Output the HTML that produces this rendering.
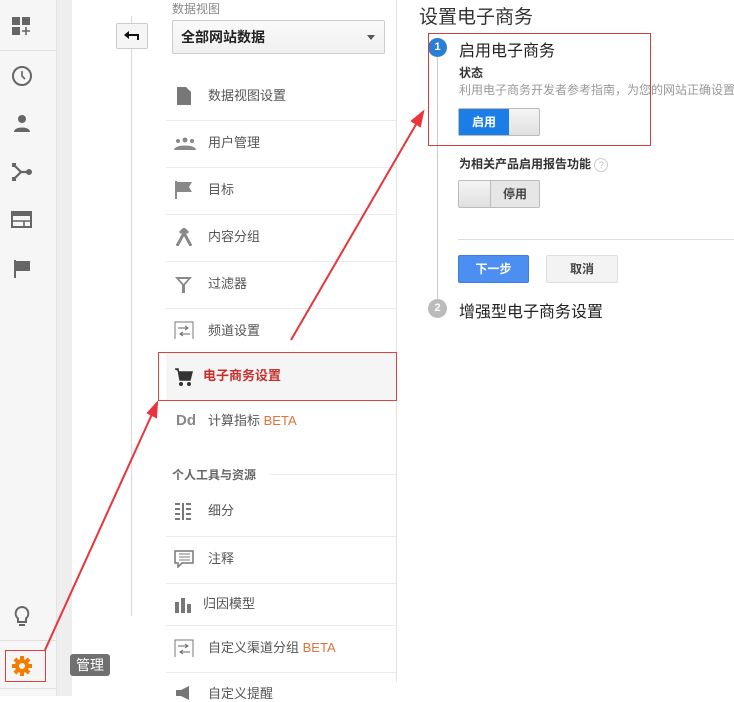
<!DOCTYPE html>
<html><head><meta charset="utf-8"><style>
*{margin:0;padding:0;box-sizing:border-box}
body{width:734px;height:696px;overflow:hidden;background:#fff;font-family:"Liberation Sans","Noto Sans CJK SC",sans-serif;position:relative;color:#333}
.a{position:absolute}
.sb{left:0;top:0;width:57px;height:696px;background:#f6f6f6;border-right:1px solid #e3e3e3}
.gut{left:57px;top:0;width:15px;height:696px;background:#eeeeee}
.mi{position:absolute;left:208px;font-size:13px;color:#555;line-height:16px}
.sep{position:absolute;left:166px;width:230px;height:1px;background:#ebebeb}
.ic{position:absolute;left:174px;width:20px;height:18px}
.beta{color:#e0733a}
</style></head><body>
<div class="a sb"></div>
<div class="a gut"></div>
<div class="a" style="left:0;top:50px;width:56px;height:1px;background:#e0e0e0"></div>
<div class="a" style="left:0;top:640px;width:56px;height:1px;background:#e0e0e0"></div>
<div class="a" style="left:0;top:688px;width:56px;height:1px;background:#e0e0e0"></div>
<svg class="a" style="left:12px;top:17px" width="22" height="20"><rect x="0" y="0" width="8" height="8" fill="#666"/><rect x="10" y="0" width="8" height="8" fill="#666"/><rect x="0" y="10" width="8" height="8" fill="#666"/><path d="M14 10v8M10 14h8" stroke="#666" stroke-width="1.6"/></svg>
<svg class="a" style="left:11px;top:65px" width="22" height="22"><circle cx="11" cy="11" r="9" fill="none" stroke="#666" stroke-width="2"/><path d="M11 6v5l3 3" stroke="#666" stroke-width="1.6" fill="none"/></svg>
<svg class="a" style="left:12px;top:114px" width="20" height="20"><circle cx="10" cy="5" r="4" fill="#666"/><path d="M2 18c0-6 16-6 16 0z" fill="#666"/></svg>
<svg class="a" style="left:11px;top:162px" width="22" height="20"><path d="M3 3l7 7h8M3 17l7-7" stroke="#666" stroke-width="2.2" fill="none"/><rect x="1" y="1" width="4" height="4" fill="#666"/><rect x="1" y="15" width="4" height="4" fill="#666"/><circle cx="18" cy="10" r="3" fill="#666"/></svg>
<svg class="a" style="left:11px;top:211px" width="22" height="18"><rect x="1" y="1" width="19" height="15" fill="none" stroke="#666" stroke-width="2"/><rect x="1" y="1" width="19" height="4" fill="#666"/><path d="M2 10h18M13 10v6" stroke="#666" stroke-width="1.6"/></svg>
<svg class="a" style="left:14px;top:259px" width="18" height="20"><path d="M1 1v18" stroke="#666" stroke-width="2"/><path d="M2 2h14v10H2z" fill="#666"/></svg>
<svg class="a" style="left:13px;top:605px" width="18" height="24"><path d="M9 2a6.5 6.5 0 0 0-4 11.5V17h8v-3.5A6.5 6.5 0 0 0 9 2z" fill="none" stroke="#666" stroke-width="2"/><path d="M6 20h6" stroke="#666" stroke-width="2"/></svg>
<svg class="a" style="left:11px;top:655px" width="22" height="22" viewBox="0 0 22 22"><g fill="#f57c00"><circle cx="11" cy="11" r="7"/><rect x="9" y="1" width="4" height="20"/><rect x="1" y="9" width="20" height="4"/><rect x="9" y="1" width="4" height="20" transform="rotate(45 11 11)"/><rect x="9" y="1" width="4" height="20" transform="rotate(-45 11 11)"/></g><circle cx="11" cy="11" r="3" fill="#f6f6f6"/></svg>
<div class="a" style="left:5px;top:650px;width:41px;height:32px;border:1px solid #e04040"></div>
<div class="a" style="left:70px;top:654px;width:40px;height:22px;background:#707070;border-radius:3px;color:#fff;font-size:14px;line-height:22px;text-align:center">管理</div>
<div class="a" style="left:131px;top:16px;width:1px;height:600px;background:#d8d8d8"></div>
<div class="a" style="left:116px;top:23px;width:32px;height:26px;border:1px solid #ccc;border-radius:2px;background:#f5f5f5"><svg width="30" height="24"><path d="M8 11h13v5" stroke="#111" stroke-width="2" fill="none"/><path d="M7 11l5-4v8z" fill="#111"/></svg></div>
<div class="a" style="left:172px;top:0;font-size:12px;color:#888">数据视图</div>
<div class="a" style="left:172px;top:20px;width:213px;height:34px;border:1px solid #ccc;border-radius:2px;background:linear-gradient(#fafafa,#f0f0f0);font-size:14px;font-weight:bold;line-height:32px;padding-left:8px;color:#222">全部网站数据<span style="position:absolute;right:9px;top:14px;border:4px solid transparent;border-top:5px solid #555"></span></div>
<div class="a" style="left:396px;top:0;width:1px;height:352px;background:#e5e5e5"></div>
<div class="a" style="left:396px;top:400px;width:1px;height:282px;background:#e5e5e5"></div>

<svg class="ic" style="top:87px"><path d="M3 0h9l5 5v13H3z" fill="#777"/></svg><div class="mi" style="top:88px">数据视图设置</div><div class="sep" style="top:120px"></div>
<svg class="ic" style="top:136px;width:24px"><circle cx="4" cy="5" r="2" fill="#888"/><circle cx="11" cy="4" r="2.5" fill="#888"/><circle cx="18" cy="5" r="2" fill="#888"/><path d="M0 14c0-6 22-6 22 0z" fill="#888"/></svg><div class="mi" style="top:135px">用户管理</div><div class="sep" style="top:167px"></div>
<svg class="ic" style="top:181px"><path d="M2 0v18" stroke="#888" stroke-width="2"/><path d="M3 1h15l-3 5 3 5H3z" fill="#888"/></svg><div class="mi" style="top:182px">目标</div><div class="sep" style="top:214px"></div>
<svg class="ic" style="top:228px"><path d="M3 18l7-13 7 13M10 5V1M6 5l4-4 4 4" stroke="#888" stroke-width="3" fill="none"/></svg><div class="mi" style="top:229px">内容分组</div><div class="sep" style="top:261px"></div>
<svg class="ic" style="top:276px"><path d="M1 1h17l-7 8v8h-3V9z" fill="#888"/><path d="M5 3h9l-4.5 5z" fill="#fff"/></svg><div class="mi" style="top:276px">过滤器</div><div class="sep" style="top:308px"></div>
<svg class="ic" style="top:321px"><rect x="1" y="1" width="18" height="18" fill="none" stroke="#777"/><path d="M4 7h10M11 5l3 2-3 2M6 13h10M9 11l-3 2 3 2" stroke="#666" fill="none"/></svg><div class="mi" style="top:323px">频道设置</div>
<div class="a" style="left:166px;top:352px;width:230px;height:48px;background:#f5f5f5"></div>
<div class="a" style="left:158px;top:352px;width:239px;height:49px;border:1px solid #e04040"></div>
<svg class="ic" style="top:368px"><path d="M1 1h3l2 11h10l2-8H5" fill="#333" stroke="#333" stroke-width="1.5"/><circle cx="7" cy="16" r="2" fill="#333"/><circle cx="15" cy="16" r="2" fill="#333"/></svg><div class="mi" style="left:203px;top:368px;color:#c8302c;font-weight:bold;font-size:13px">电子商务设置</div>
<div class="mi" style="left:176px;top:413px;font-weight:bold;color:#888;font-size:15px">Dd</div><div class="mi" style="top:413px">计算指标 <span class="beta">BETA</span></div>
<div class="a" style="left:172px;top:466px;font-size:12px;font-weight:bold;color:#666">个人工具与资源</div><div class="a" style="left:270px;top:474px;width:126px;height:1px;background:#ebebeb"></div>
<svg class="ic" style="top:502px"><path d="M1 2h5M1 7h5M1 12h5M1 17h5M9 1v18M12 2h5M12 7h5M12 12h5M12 17h5" stroke="#777" stroke-width="2"/></svg><div class="mi" style="top:503px">细分</div><div class="sep" style="top:536px"></div>
<svg class="ic" style="top:550px"><path d="M1 1h18v12H8l-4 4v-4H1z" fill="none" stroke="#777" stroke-width="1.5"/><path d="M5 4h11M5 7h11M5 10h11" stroke="#777"/></svg><div class="mi" style="top:551px">注释</div><div class="sep" style="top:583px"></div>
<svg class="ic" style="top:595px"><path d="M1 7h4v11H1zM7 3h4v15H7zM13 9h4v9h-4z" fill="#777"/></svg><div class="mi" style="left:203px;top:596px">归因模型</div><div class="sep" style="top:625px"></div>
<svg class="ic" style="top:639px"><rect x="1" y="1" width="18" height="18" fill="none" stroke="#777"/><path d="M4 7h10M11 5l3 2-3 2M6 13h10M9 11l-3 2 3 2" stroke="#666" fill="none"/></svg><div class="mi" style="top:640px">自定义渠道分组 <span class="beta">BETA</span></div><div class="sep" style="top:672px"></div>
<svg class="ic" style="top:684px"><path d="M2 6h5l8-4v14l-8-4H2z" fill="#777"/></svg><div class="mi" style="top:686px">自定义提醒</div>
<div class="a" style="left:419px;top:2px;font-size:19px;color:#333">设置电子商务</div>
<div class="a" style="left:437px;top:56px;width:1px;height:244px;background:#ccc"></div>
<div class="a" style="left:428px;top:38px;width:19px;height:19px;border-radius:50%;background:#2a7fd4;color:#fff;font-size:11px;font-weight:bold;text-align:center;line-height:19px">1</div>
<div class="a" style="left:459px;top:37px;font-size:16px;color:#222">启用电子商务</div>
<div class="a" style="left:459px;top:64px;font-size:12px;font-weight:bold;color:#333">状态</div>
<div class="a" style="left:459px;top:81px;font-size:12px;color:#999;white-space:nowrap">利用电子商务开发者参考指南，为您的网站正确设置</div>
<div class="a" style="left:458px;top:108px;width:82px;height:28px;border:1px solid #bbb;border-radius:2px;background:linear-gradient(#f5f5f5,#e0e0e0)"><div style="width:50px;height:26px;background:#1a7ee6;color:#fff;font-size:12px;font-weight:bold;text-align:center;line-height:26px">启用</div></div>
<div class="a" style="left:428px;top:33px;width:223px;height:113px;border:1px solid #d04040"></div>
<div class="a" style="left:459px;top:155px;font-size:12px;font-weight:bold;color:#333">为相关产品启用报告功能 <span style="display:inline-block;width:14px;height:14px;border:1px solid #ccc;border-radius:50%;font-size:9px;color:#bbb;text-align:center;line-height:12px;font-weight:normal">?</span></div>
<div class="a" style="left:458px;top:180px;width:82px;height:28px;border:1px solid #bbb;border-radius:2px;background:#e6e6e6"><div style="position:absolute;left:0;top:0;width:32px;height:26px;border-right:1px solid #bbb;background:linear-gradient(#f5f5f5,#e0e0e0)"></div><div style="position:absolute;left:32px;width:48px;top:0;font-size:12px;font-weight:bold;text-align:center;line-height:26px;color:#444">停用</div></div>
<div class="a" style="left:458px;top:239px;width:276px;height:1px;background:#ddd"></div>
<div class="a" style="left:458px;top:255px;width:71px;height:28px;background:#4d8ff0;border:1px solid #3d7fe0;border-radius:2px;color:#fff;font-size:12px;font-weight:bold;text-align:center;line-height:26px">下一步</div>
<div class="a" style="left:546px;top:255px;width:72px;height:28px;background:#f3f3f3;border:1px solid #ddd;border-radius:2px;color:#444;font-size:12px;font-weight:bold;text-align:center;line-height:26px">取消</div>
<div class="a" style="left:428px;top:299px;width:19px;height:19px;border-radius:50%;background:#bbb;color:#fff;font-size:11px;font-weight:bold;text-align:center;line-height:19px">2</div>
<div class="a" style="left:459px;top:298px;font-size:16px;color:#222">增强型电子商务设置</div>
<svg class="a" style="left:0;top:0" width="734" height="696"><g stroke="#e8343a" stroke-width="2" fill="#e8343a"><path d="M45 650L153 412"/><path d="M157 403l-1 14-8-4z"/><path d="M291 340L418 121"/><path d="M423 112l-3 14-8-5z"/></g></svg>
</body></html>
